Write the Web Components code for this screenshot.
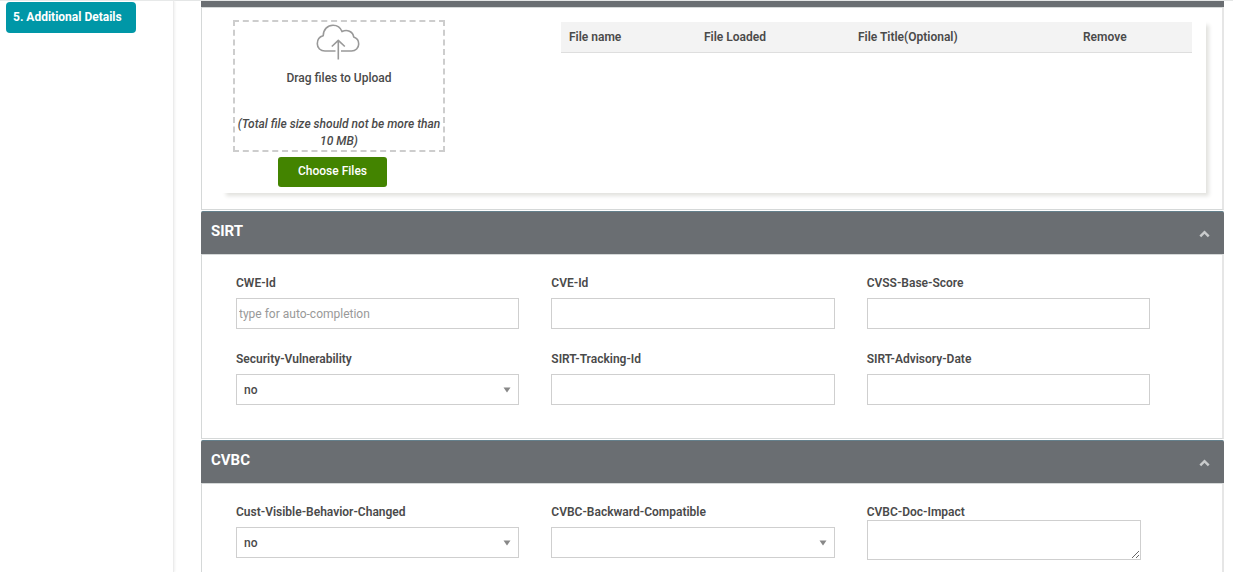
<!DOCTYPE html>
<html lang="en">
<head>
<meta charset="utf-8">
<title>Additional Details</title>
<style>
html, body { margin: 0; }
body { font-family: Roboto, "Liberation Sans", sans-serif; font-size: 12px; line-height: 16px; color: #4a4a4a; background: #fff; }
</style>
</head>
<body>
<app-shell>
  <step-link slot="nav" href="#details">5. Additional Details</step-link>
  <section-panel slim>
    <upload-card></upload-card>
  </section-panel>
  <section-panel heading="SIRT">
    <field-grid>
      <form-field label="CWE-Id" kind="text" hint="type for auto-completion"></form-field>
      <form-field label="CVE-Id" kind="text"></form-field>
      <form-field label="CVSS-Base-Score" kind="text"></form-field>
      <form-field label="Security-Vulnerability" kind="select" value="no"></form-field>
      <form-field label="SIRT-Tracking-Id" kind="text"></form-field>
      <form-field label="SIRT-Advisory-Date" kind="text"></form-field>
    </field-grid>
  </section-panel>
  <section-panel heading="CVBC" last>
    <field-grid>
      <form-field label="Cust-Visible-Behavior-Changed" kind="select" value="no"></form-field>
      <form-field label="CVBC-Backward-Compatible" kind="select" value=""></form-field>
      <form-field label="CVBC-Doc-Impact" kind="area"></form-field>
    </field-grid>
  </section-panel>
</app-shell>

<script>
const define = (name, render) => customElements.define(name, class extends HTMLElement {
  constructor() {
    super();
    this.attachShadow({ mode: 'open' });
  }
  connectedCallback() {
    this.shadowRoot.innerHTML = render(this);
  }
});

define('app-shell', () => `
  <style>
    :host { display: flex; box-sizing: border-box; min-height: 100vh; border-top: 1px solid #e4e6e6; }
    nav { flex: none; box-sizing: border-box; width: 174px; padding: 1px 6px; border-right: 1px solid #ececec; box-shadow: 1px 0 2px #f0f0f0; }
    main { flex: 1; display: flex; flex-direction: column; gap: 1px; min-width: 0; padding: 0 9px 0 27px; }
  </style>
  <nav><slot name="nav"></slot></nav>
  <main><slot></slot></main>`);

define('step-link', el => `
  <style>
    :host { display: inline-block; }
    a { display: block; box-sizing: border-box; width: 130px; padding: 7px 0 8px 7px; border-radius: 4px; background: #0097a7; color: #fff; font-weight: 700; text-decoration: none; }
  </style>
  <a href="${el.getAttribute('href')}"><slot></slot></a>`);

define('section-panel', el => `
  <style>
    :host { display: flex; flex-direction: column; }
    :host([last]) { flex: 1; }
    header { display: flex; justify-content: space-between; box-sizing: border-box; height: 43px; padding: 9px 14px 0 10px; background: #6a6e72; border-top: 1px solid #64808c; color: #fff; border-radius: 2px 2px 0 0; }
    :host([slim]) header { height: 6px; padding: 0; border: 0; border-radius: 0; }
    h2 { margin: 0; font-size: 15px; line-height: 20px; font-weight: 700; }
    button { align-self: flex-start; margin: 8px 0 0; padding: 0; border: 0; background: none; display: block; width: 11px; height: 10px; }
    svg { display: block; }
    .body { flex: 1; padding-bottom: 22px; border: 1px solid #d5d8d8; border-right: 2px solid #e6e6e6; }
    :host([slim]) .body { padding-bottom: 0; }
    :host([last]) .body { padding-bottom: 0; border-bottom: 0; }
  </style>
  <header>${el.hasAttribute('heading') ? `
    <h2>${el.getAttribute('heading')}</h2>
    <button aria-label="Collapse"><svg width="11" height="10" viewBox="0 0 11 10"><path d="M1.300 7.300 5.500 3.200l4.200 4.100" fill="none" stroke="#c9cbcc" stroke-width="2.500"/></svg></button>` : ''}
  </header>
  <div class="body"><slot></slot></div>`);

define('upload-card', () => `
  <style>
    :host { display: flex; align-items: flex-start; box-sizing: border-box; min-height: 173px; margin: 12px 16px 16px 19px; padding: 0 14px 0 12px; box-shadow: 4px 4px 4px -1px #e2e2df; background: #fff; }
    .pick { flex: none; display: flex; flex-direction: column; align-items: center; width: 212px; margin-right: 116px; }
    .drop { box-sizing: border-box; width: 100%; height: 132px; border: 2px dashed #cdcdcd; text-align: center; font-weight: 500; }
    .drop svg { display: block; margin: 2px auto 10px 81px; }
    p { margin: 0; }
    .note { margin-top: 30px; line-height: 17px; font-style: italic; }
    button { width: 109px; height: 30px; margin: 5px 13px 0 0; padding: 0 0 2px; border: 0; border-radius: 3px; background: #438400; color: #fff; font: 500 12px Roboto, sans-serif; }
    table { flex: 1; min-width: 0; margin-top: 2px; border-collapse: collapse; table-layout: fixed; }
    th { padding: 7px 8px; background: #f3f3f3; border-bottom: 1px solid #dedede; text-align: left; font-weight: 600; }
    .a { width: 119px; } .b { width: 138px; } .c { width: 209px; }
  </style>
  <div class="pick">
    <div class="drop">
      <svg width="44" height="36" viewBox="0 0 44 36" fill="none" stroke="#999" stroke-width="1.6" stroke-linejoin="round">
        <path d="M19.5 27H9C4.500 27 1.300 24 1.300 19.800 1.300 15.800 3.700 12.600 7.200 11.800 7.300 5.500 11.500 1.200 17 1.200 21.300 1.200 24.600 3.700 26 7.600 31 4.800 37 7.500 37.700 13 40.700 14 42.700 16.700 42.700 20 42.700 24 39.600 27 35.500 27H25"/>
        <path d="M22.300 35.500V16.500M15.800 22.500l6.500-6.200 6.500 6.200"/>
      </svg>
      <p>Drag files to Upload</p>
      <p class="note">(Total file size should not be more than 10 MB)</p>
    </div>
    <button>Choose Files</button>
  </div>
  <table>
    <thead><tr><th class="a">File name</th><th class="b">File Loaded</th><th class="c">File Title(Optional)</th><th>Remove</th></tr></thead>
  </table>`);

define('field-grid', () => `
  <style>
    :host { display: grid; grid-template-columns: repeat(3, minmax(0, 1fr)); gap: 22px 32px; padding: 20px 72px 11px 34px; }
  </style>
  <slot></slot>`);

define('form-field', el => {
  const kind = el.getAttribute('kind');
  const value = el.getAttribute('value') || '';
  const control = {
    text: `<input id="f" type="text" placeholder="${el.getAttribute('hint') || ''}">`,
    select: `<div class="pick"><select id="f"><option>${value}</option></select><svg width="8" height="6" viewBox="0 0 8 6"><path d="M.5.500h7L4 5.500z" fill="#888"/></svg></div>`,
    area: `<textarea id="f"></textarea>`
  }[kind];
  return `
  <style>
    :host { display: flex; flex-direction: column; gap: 7px; min-height: 54px; }
    :host([kind=area]) { gap: 0; }
    label { font-weight: 600; }
    input, select, textarea { display: block; box-sizing: border-box; width: 100%; height: 31px; margin: 0; border: 1px solid #cfcfcf; border-radius: 0; background: #fff; color: #4a4a4a; font: 12px Roboto, sans-serif; outline: 0; }
    input { padding: 0 2px; }
    input::placeholder { color: #999; }
    select { appearance: none; padding: 0 7px; font-weight: 500; }
    textarea { width: calc(100% - 9px); height: 40px; }
    .pick { display: grid; align-items: center; }
    .pick > * { grid-area: 1 / 1; }
    .pick svg { justify-self: end; margin-right: 8px; pointer-events: none; }
  </style>
  <label for="f">${el.getAttribute('label')}</label>
  ${control}`;
});
</script>
</body>
</html>
